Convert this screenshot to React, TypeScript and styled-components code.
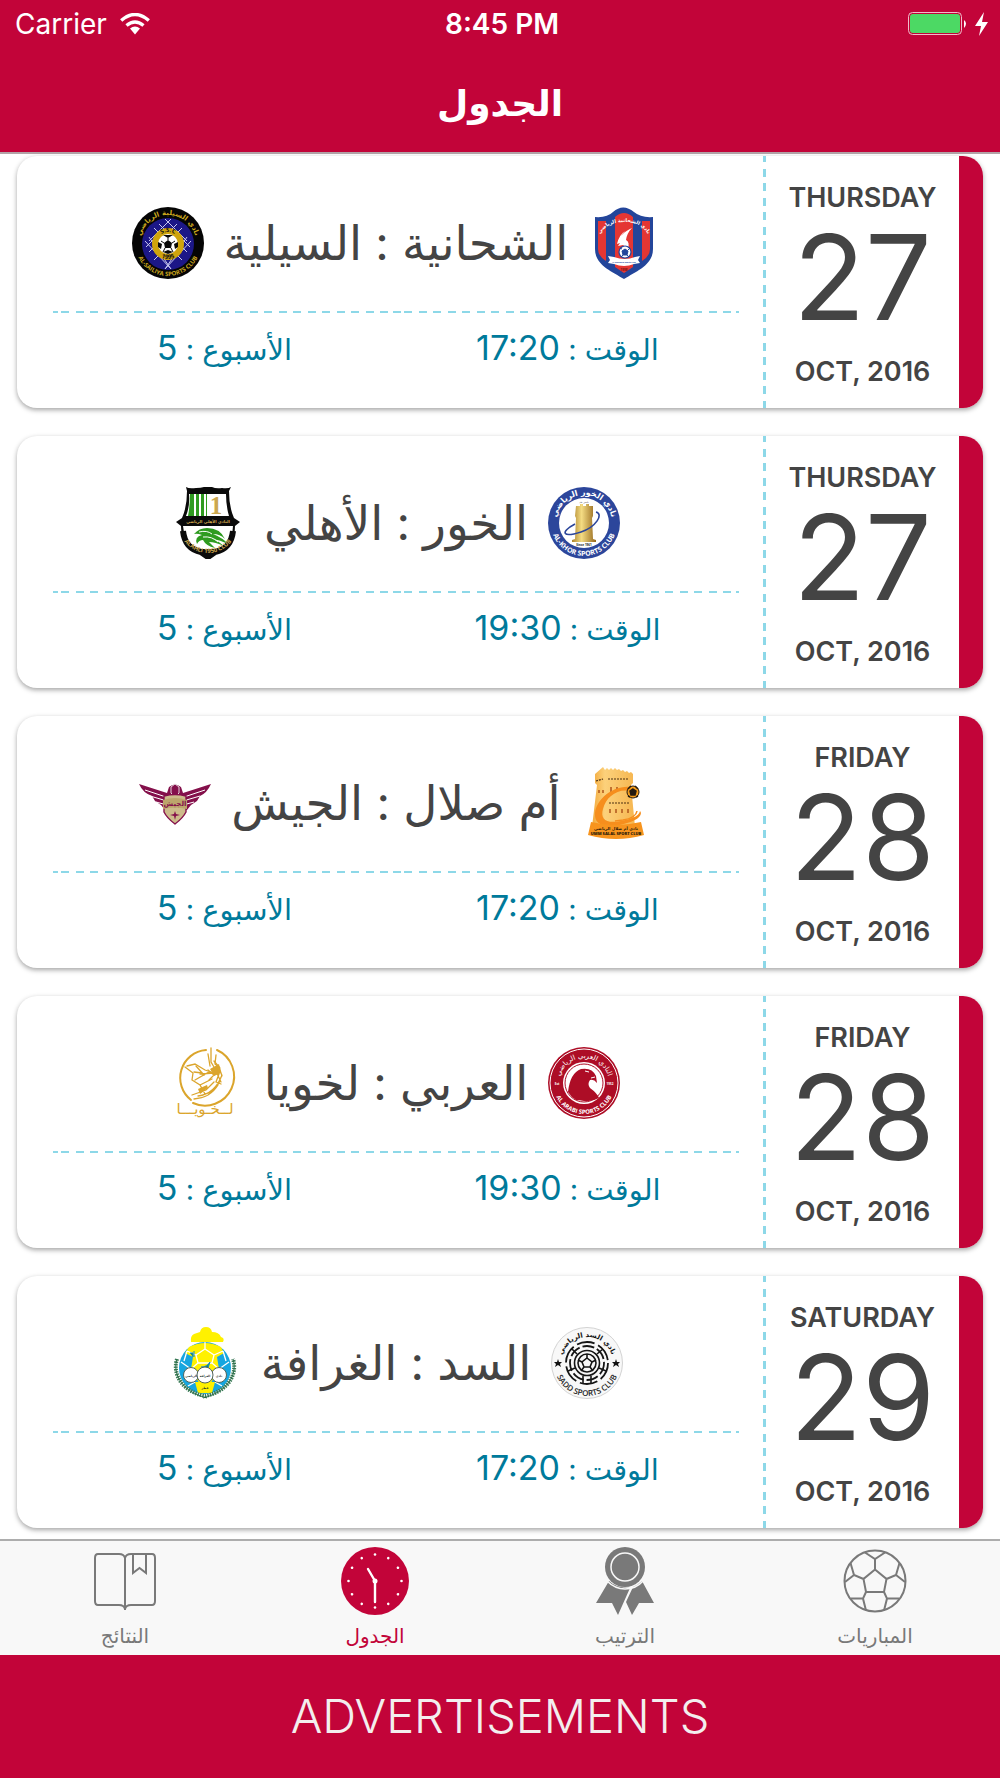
import React from 'react';
import styled, { createGlobalStyle } from 'styled-components';

const crimson = '#c20439';
const ink = '#444444';
const teal = '#007a9b';
const dash = '#8dd8e8';
const arabic = "'DejaVu Sans', sans-serif";
const ui = "Inter, 'DejaVu Sans', sans-serif";

const GlobalStyle = createGlobalStyle`
  * { box-sizing: border-box; }
  body { margin: 0; background: #fff; font-family: ${ui}; }
`;

const Screen = styled.div`
  display: flex;
  flex-direction: column;
  min-height: 100vh;
`;

const Header = styled.header`
  background: ${crimson};
  color: #fff;
  border-bottom: 2px solid #b3a3a7;
`;

const StatusBar = styled.div`
  display: grid;
  grid-template-columns: 1fr auto 1fr;
  align-items: center;
  height: 48px;
  padding: 0 11px 0 15px;
  font-size: 28px;
  line-height: 32px;
`;

const Carrier = styled.span`
  display: flex;
  align-items: center;
  gap: 13px;
`;

const Clock = styled.time`
  font-weight: 600;
`;

const Power = styled.span`
  display: flex;
  justify-content: flex-end;
  align-items: center;
  gap: 8px;
`;

const Title = styled.h1`
  margin: 0;
  height: 104px;
  padding-top: 30px;
  text-align: center;
  font-size: 36px;
  line-height: 50px;
  font-weight: 700;
`;

const List = styled.main`
  flex: 1;
  display: flex;
  flex-direction: column;
  gap: 28px;
  padding: 2px 17px 11px;
`;

const Card = styled.article`
  display: flex;
  background: #fff;
  border-radius: 20px;
  overflow: hidden;
  box-shadow: 0 2px 5px rgba(0, 0, 0, 0.36);
`;

const Match = styled.div`
  flex: 1;
  padding: 51px 24px 37px 36px;
`;

const Teams = styled.div`
  display: flex;
  align-items: center;
  justify-content: center;
  gap: 20px;
  height: 72px;
`;

const TeamNames = styled.h2`
  margin: 0;
  color: ${ink};
  font-size: 47px;
  line-height: 72px;
  font-weight: 400;
  white-space: nowrap;
`;

const Divider = styled.div`
  display: grid;
  grid-template-columns: 1fr 1fr;
  height: 2px;
  margin-top: 32px;
`;

const DashedHalf = styled.span`
  background:
    linear-gradient(${dash}, ${dash}) left / 5px 100% no-repeat,
    linear-gradient(${dash}, ${dash}) right / 3px 100% no-repeat,
    linear-gradient(90deg, ${dash} 8px, transparent 8px 15px, ${dash} 15px 23px, transparent 23px) 8px 0 / 29px 100% repeat-x;
`;

const Facts = styled.div`
  display: grid;
  grid-template-columns: 1fr 1fr;
  padding-top: 16px;
  color: ${teal};
  font-size: 29px;
  line-height: 42px;
  text-align: center;
`;

const Fact = styled.span`
  white-space: nowrap;
`;

const FactValue = styled.bdi`
  font-size: 34px;
  line-height: 34px;
`;

const DateBox = styled.time`
  width: 196px;
  padding: 26px 0 19px 3px;
  display: flex;
  flex-direction: column;
  align-items: center;
  color: ${ink};
  background: linear-gradient(${dash} 8px, transparent 8px 15px, ${dash} 15px 23px, transparent 23px) 0 -2px / 3px 29px repeat-y;
`;

const DateLabel = styled.span`
  font-size: 27px;
  line-height: 32px;
  font-weight: 600;
`;

const DayNumber = styled.span`
  font-size: 118px;
  line-height: 126px;
  margin-bottom: 16px;
`;

const Stripe = styled.div`
  width: 24px;
  background: ${crimson};
`;

const TabBar = styled.nav`
  display: grid;
  grid-template-columns: repeat(4, 1fr);
  height: 116px;
  border-top: 2px solid #adadad;
  background: #f8f8f8;
`;

const Tab = styled.button<{ $active?: boolean }>`
  display: flex;
  flex-direction: column;
  align-items: center;
  gap: 7px;
  padding: 6px 0 0;
  border: 0;
  background: none;
  color: ${(p) => (p.$active ? crimson : '#797979')};
  font-family: ${arabic};
  font-size: 20px;
  line-height: 28px;
`;

const Advert = styled.aside`
  display: flex;
  align-items: center;
  justify-content: center;
  height: 123px;
  padding-bottom: 2px;
  background: ${crimson};
  color: #f3eeee;
  font-size: 47px;
  font-weight: 300;
`;

/* ---------- club badges, all on a 72 x 72 grid ---------- */

type RingProps = {
  id: string; r: number; text: string; size: number; fill: string;
  bottom?: boolean; rtl?: boolean; weight?: number;
};

const RingText = ({ id, r, text, size, fill, bottom, rtl, weight = 700 }: RingProps) => (
  <>
    <path id={id} fill="none" d={`M${36 - r} 36A${r} ${r} 0 0 ${bottom ? 0 : 1} ${36 + r} 36`} />
    <text fontSize={size} fontWeight={weight} fill={fill} fontFamily={rtl ? arabic : "'Open Sans', sans-serif"} direction={rtl ? 'rtl' : 'ltr'}>
      <textPath href={`#${id}`} startOffset="50%" textAnchor="middle">{text}</textPath>
    </text>
  </>
);

const Badge = ({ label, children }: { label: string; children: React.ReactNode }) => (
  <svg width="72" height="72" viewBox="0 0 72 72" role="img" aria-label={label}>{children}</svg>
);

const Sailiya = () => (
  <Badge label="السيلية">
    <circle cx="36" cy="36" r="36" fill="#050505" />
    <circle cx="36" cy="37" r="26" fill="#1c1787" />
    <g stroke="#c9c9f0" strokeWidth="1" fill="none">
      <path d="M33 12l22 22M39 12L17 34M27 17l28 28M45 17L17 45M17 30l22 32M55 30L33 62M13 34l26 28M59 34L33 62M14 40l8-8M58 40l-8-8M22 21l8 8M50 21l-8 8M22 53l8-8M50 53l-8-8" />
    </g>
    <circle cx="36" cy="37" r="16" fill="#d0a40c" />
    <circle cx="36" cy="37" r="10" fill="#fff" />
    <path d="M36 33l4 3-1 5h-6l-1-5zM31 28h10l-5 3zM26 35l4 2-1 5-3-2zM46 35l-4 2 1 5 3-2zM31 45l5-2 5 2-5 2z" fill="#090909" />
    <path d="M36 31v2M40 36l3-2M39 41l2 4M33 41l-2 4M32 36l-3-2" stroke="#090909" strokeWidth="1" />
    <RingText id="sa-a" r={11} text="S.S.C" size={6} fill="#111" />
    <RingText id="sa-b" r={16} text="1995" size={6} fill="#111" bottom />
    <RingText id="sa-c" r={28} text="نادي السيلية الرياضي" size={7} fill="#cda91e" rtl />
    <RingText id="sa-d" r={33} text="AL-SAILIYA SPORTS CLUB" size={6} fill="#cda91e" bottom />
  </Badge>
);

const Shahaniya = () => (
  <Badge label="الشحانية">
    <path d="M7 10q12 1 18-5 10-9 21 0 7 6 19 5v32c0 16-16 22-29 30C23 64 7 58 7 42z" fill="#23459a" />
    <path d="M10 14h8v40q-8-5-8-12zM54 14h8v28q0 7-8 12zM27 10q9-8 18 0v50l-9 6-9-6z" fill="#e43633" />
    <path d="M44 21C37 24 31 29 29 37l3-1-2 3 5-1 5 4q2-7-2-9 1-7 6-12zM37 24q-6 4-8 13 3-8 8-13z" fill="#fff" />
    <circle cx="37" cy="45" r="6" fill="#fff" stroke="#23459a" strokeWidth="1.2" />
    <path d="M37 42l3 2-1 4h-4l-1-4zM32 41l2 1M42 41l-2 2M33 50l2-2M41 50l-2-2" fill="#23459a" stroke="#23459a" />
    <path d="M20 49l6 1q11 4 21 0l5-1-2 4 2 3-6 1q-10 4-20 0l-6-1 2-3z" fill="#fff" />
    <text x="36" y="56" textAnchor="middle" fontFamily="'Open Sans', sans-serif" fontSize="2" fontWeight="700" fill="#23459a">Al Shahania Sports Club</text>
    <text x="36" y="64" textAnchor="middle" fontFamily="'Open Sans', sans-serif" fontSize="3" fontWeight="700" fill="#711">1998</text>
    <path id="sh-a" d="M10 32Q16 15 36 15T62 32" fill="none" />
    <text fontFamily={arabic} fontSize="5" fontWeight="700" fill="#fff" direction="rtl">
      <textPath href="#sh-a" startOffset="50%" textAnchor="middle">نادي الشحانية الرياضي</textPath>
    </text>
  </Badge>
);

const Khor = () => (
  <Badge label="الخور">
    <circle cx="36" cy="36" r="36" fill="#2c469b" />
    <circle cx="36" cy="36" r="25" fill="#fff" />
    <defs>
      <linearGradient id="kh-g">
        <stop offset="0" stopColor="#ad842c" /><stop offset=".4" stopColor="#f4dc83" /><stop offset="1" stopColor="#94661a" />
      </linearGradient>
    </defs>
    <path d="M28 19h4v-2h3v2h3v-2h3v2h4v10l-1 2 1 21 3 1v2H24v-2l3-1 1-21-1-2z" fill="url(#kh-g)" />
    <path d="M27 37c-15 8-13 14 6 8 15-5 23-18 15-20" fill="none" stroke="#2c469b" strokeWidth="1.600" />
    <text x="36" y="16" textAnchor="middle" fontFamily={arabic} fontSize="2" fill="#333">تأسس عام</text>
    <text x="36" y="59" textAnchor="middle" fontFamily="'Open Sans', sans-serif" fontSize="3" fontWeight="700" fill="#222">Since 1961</text>
    <RingText id="kh-a" r={28} text="نادي الخور الرياضي" size={8} fill="#fff" rtl />
    <RingText id="kh-b" r={33} text="AL-KHOR SPORTS CLUB" size={7} fill="#fff" bottom />
  </Badge>
);

const Ahli = () => (
  <Badge label="الأهلي">
    <path d="M14 0q3 2 10 1 5 0 8-1h8q4 2 10 1 6 1 9-1l-2 4q0 16 5 27l6 4-5 4q0 23-20 28-5 1-8 5-3-4-8-5Q9 62 9 39l-5-4 6-4Q15 20 15 4z" fill="#0a0a0a" />
    <path d="M17 7h37q0 12 3 22H14q4-10 3-22z" fill="#fff" />
    <path d="M18 7h4v22h-6q2-10 2-22zM24 7h3v22h-3zM29 7h3v22h-3zM34 7h1v22h-1z" fill="#2f9b20" />
    <text x="44" y="27" textAnchor="middle" fontFamily="'Liberation Serif', serif" fontSize="25" fontWeight="700" fill="#cba74f">1</text>
    <text x="36" y="36" textAnchor="middle" fontFamily={arabic} fontSize="4" fontWeight="700" fill="#d4a94f" direction="rtl">النادي الأهلي الرياضي</text>
    <path d="M11 39h50q-1 20-18 23H29Q13 58 11 39z" fill="#fff" />
    <path d="M22 47q5-6 13-6 13 0 18 11-5-5-12-5 10 4 15 10-8-4-15-5 7 3 11 7-9-4-15-4l6 6q-9-2-12-8-4 0-6 4-3-7 5-9-5-2-8-1z" fill="#2f9b20" />
    <path d="M27 45q8-2 13 2M31 50q9-1 15 5" fill="none" stroke="#fff" strokeWidth="1" />
    <path d="M11 44q2 18 18 21l7 5 7-5q16-3 18-21" fill="none" stroke="#0a0a0a" strokeWidth="6" />
    <RingText id="ah-a" r={30} text="ALAHLI 1950 CLUB" size={6} fill="#cba74f" bottom />
  </Badge>
);

const UmmSalal = () => (
  <Badge label="أم صلال">
    <defs>
      <linearGradient id="us-g">
        <stop offset="0" stopColor="#f2a93b" /><stop offset=".3" stopColor="#fcd17b" /><stop offset="1" stopColor="#f6b650" />
      </linearGradient>
    </defs>
    <g transform="translate(5 0)">
      <path d="M9 7l8-7 2 3 2-2 2 2 2-2 2 2 2-2 2 2 2-1 2 2 2-1 2 2 2-1 2 2 2-1 2 2v9l-2 2 4 42H6l5-42-2-2z" fill="url(#us-g)" />
      <path d="M22 12h21M23 36h20M10 14l7-2" stroke="#4d3111" strokeWidth="1.200" strokeDasharray="2 1" />
      <path d="M13 23v3M17 23v3M25 20v5M31 20v4M24 42v4M30 42v4M36 42v4M42 42v4" fill="none" stroke="#b0551b" strokeWidth="1.500" />
      <path d="M45 20C26 18 8 34 9 49c1 13 20 11 32 7 12-3 16-9 13-12-1 6-10 8-19 10-15 3-21-2-18-12 3-12 14-21 28-18z" fill="#f68e1d" />
      <path d="M51 44q-1 7-14 9l-8 1" fill="none" stroke="#f68e1d" strokeWidth="1.500" />
      <circle cx="47" cy="25" r="6" fill="#f59c1a" stroke="#241a10" strokeWidth="1" />
      <path d="M47 22l3 2-1 4h-4l-1-4zM42 22l3-3M52 22l-3-3M42 29l2 1M52 29l-2 1" fill="#241a10" stroke="#241a10" strokeWidth="1.500" />
      <path d="M5 55q25 6 50 0l3 13q-28 8-56 0z" fill="#f7941e" />
      <text x="30" y="63" textAnchor="middle" fontFamily={arabic} fontSize="4" fontWeight="700" fill="#2a1a09" direction="rtl">نادي أم صلال الرياضي</text>
      <text x="30" y="68" textAnchor="middle" fontFamily="'Open Sans', sans-serif" fontSize="4" fontWeight="800" fill="#2a1a09">UMM SALAL SPORT CLUB</text>
    </g>
  </Badge>
);

const Jaish = () => (
  <Badge label="الجيش">
    <path d="M0 17l28 9 2-6q6-5 12 0l2 6 28-9q-4 9-11 12l-3 5-6 4-4 5H26l-4-5-6-4-3-5Q4 26 0 17z" fill="#84104b" />
    <path d="M6 23l21 7M11 29l17 5M17 35l11 3M66 23l-21 7M61 29l-17 5M55 35l-11 3" stroke="#fff" strokeWidth="1" />
    <path d="M36 17l4 3v6l-4 4-4-4v-6z" fill="#84104b" stroke="#e5d5dc" strokeWidth="1" />
    <path d="M25 29q11-3 22 0v16q-3 6-11 12-8-6-11-12z" fill="#cdbb8b" stroke="#84104b" strokeWidth="1.400" />
    <path d="M24 33q12-4 24 0v9q-12-3-24 0z" fill="#bca66c" />
    <text x="36" y="39" textAnchor="middle" fontFamily={arabic} fontSize="7" fontWeight="700" fill="#84104b" direction="rtl">الجيش</text>
    <path d="M36 44l1 3 4 1-4 1-1 4-1-4-4-1 4-1z" fill="#84104b" />
  </Badge>
);

const Arabi = () => (
  <Badge label="العربي">
    <circle cx="36" cy="36" r="36" fill="#ad0d26" />
    <circle cx="36" cy="36" r="34" fill="none" stroke="#fff" strokeWidth="1" />
    <circle cx="36" cy="36" r="21" fill="#fff" />
    <circle cx="36" cy="36" r="19" fill="none" stroke="#ad0d26" strokeWidth="1" />
    <path d="M20 45Q22 26 33 22q11-2 15 7l1 7q-3-4-7-3-3 4 0 8 7 5 9 10-7 4-15 3l-6-1-2 0q-5-3-8-8z" fill="#ad0d26" />
    <path d="M37 24l4 1M43 31l4-1" stroke="#fff" strokeWidth="1" />
    <text x="9" y="38" textAnchor="middle" fontFamily="'Open Sans', sans-serif" fontSize="3" fontWeight="700" fill="#fff">Est</text>
    <text x="62" y="38" textAnchor="middle" fontFamily="'Open Sans', sans-serif" fontSize="3" fontWeight="700" fill="#fff">1952</text>
    <RingText id="ar-a" r={25} text="النادي العربي الرياضي" size={7} fill="#fff" rtl weight={400} />
    <RingText id="ar-b" r={31} text="AL ARABI SPORTS CLUB" size={6} fill="#fff" bottom />
  </Badge>
);

const Lekhwiya = () => (
  <Badge label="لخويا">
    <g fill="none" stroke="#dba52c" strokeLinecap="round">
      <path d="M34 3A28 28 0 0 0 19 53M45 3a28 28 0 0 1-24 53" strokeWidth="2" />
      <path d="M39 1v14l3 5M36 7l2 12M44 8l-1 9 5 4M15 19l8-2 10 6 9 3-14 1M13 20l8 6-1 7 8 5 5 9M23 33l14-8 10 2-3 8 5 2M28 38l12-6M22 52q16-1 24-14M20 48l14-5 8-8M33 47q9-1 15-13M26 49q17-2 24-21M47 20l3 9M42 20l7 15" strokeWidth="1.300" />
      <path d="M24 19l8 9M30 26l-8-1M36 23l6 5-5 5M42 14l5 6" strokeWidth="1.300" />
    </g>
    <path d="M38 22l9-5 2 9-7 3zM26 42l9-4 1 3-8 6z" fill="#dba52c" />
    <text x="33" y="67" textAnchor="middle" fontFamily={arabic} fontSize="15" fill="#dba52c" direction="rtl">لــخـويـــا</text>
  </Badge>
);

const Sadd = () => (
  <Badge label="السد">
    <circle cx="36" cy="36" r="35.500" fill="#f8f8f8" stroke="#d2d2d2" strokeWidth="1" />
    <g fill="none" stroke="#151515">
      <circle cx="36" cy="36" r="21" strokeWidth="1.800" strokeDasharray="18 4" />
      <circle cx="36" cy="36" r="17" strokeWidth="1.800" strokeDasharray="12 3" />
      <circle cx="36" cy="36" r="12.500" strokeWidth="1.600" />
      <circle cx="36" cy="36" r="9" strokeWidth="1.600" />
      <path d="M36 31l5 4-2 5h-6l-2-5zM36 31v-4M41 35l4-2M39 40l3 4M33 40l-3 4M31 35l-4-2M21 22l5 5M52 22l-6 5M17 44l7-3M55 44l-7-3M32 49v8M40 49v8" strokeWidth="1.600" />
    </g>
    <path d="M7 32l1 3h3l-2 2 1 3-3-2-3 2 1-3-2-2h3zM65 32l1 3h3l-2 2 1 3-3-2-3 2 1-3-2-2h3z" fill="#111" />
    <RingText id="sd-a" r={26} text="نادي السد الرياضي" size={7} fill="#151515" rtl />
    <RingText id="sd-b" r={33} text="SADD SPORTS CLUB" size={8} fill="#222" bottom weight={600} />
  </Badge>
);

const Gharafa = () => (
  <Badge label="الغرافة">
    <path d="M22 15q-1-6 3-8 3-1 6-2 1-5 6-5t6 5q7 0 9 5 4 1 2 5z" fill="#fff100" />
    <circle cx="36" cy="41" r="26" fill="#16a6e0" />
    <path d="M20 20q16-8 32 0l3 6-7 4 2 12-14 24-14-24 2-12-8-4z" fill="#fff100" />
    <path d="M26 55h20l-3 11H29z" fill="#fff100" />
    <g fill="none" stroke="#fff" strokeWidth="1.300">
      <path d="M36 22l-9 6 2 8h14l2-8zM36 22v-7M27 28l-9-4M45 28l9-4M29 36l-7 6M43 36l7 6M12 35l10 7v14M60 35l-10 7v14M18 24l-3 10M54 24l3 10M26 55l-7 4M46 55l7 4" />
    </g>
    <path d="M21 26h3v4M25 24v6M32 40q6 0 9-5l-2 6-5 2z" fill="#19895f" stroke="#158acb" strokeWidth="1" />
    <g fill="#fff" stroke="#53645b" strokeWidth="1">
      <circle cx="22" cy="48" r="7.500" /><circle cx="50" cy="48" r="7.500" /><circle cx="36" cy="48" r="8" />
    </g>
    <g fontFamily={arabic} fontSize="3" fontWeight="700" fill="#20312a" textAnchor="middle" direction="rtl">
      <text x="50" y="50">نادي</text><text x="36" y="50">الغرافة</text><text x="22" y="50">الرياضي</text><text x="36" y="62">قطر</text>
    </g>
    <path d="M8 32C3 48 14 65 36 69 58 65 69 48 64 32" fill="none" stroke="#3a7c57" strokeWidth="4" strokeDasharray="1.500 1" />
    <path d="M8 32C3 48 14 65 38 71M64 32C69 48 58 65 34 71" fill="none" stroke="#2f6d4b" strokeWidth="1" />
  </Badge>
);

/* ---------- tab icons, all on a 68 x 68 grid ---------- */

const TabIcon = ({ children }: { children: React.ReactNode }) => (
  <svg width="68" height="68" viewBox="0 0 68 68" fill="none" stroke="currentColor" strokeWidth="2" aria-hidden="true">{children}</svg>
);

const BallIcon = () => (
  <TabIcon>
    <circle cx="34" cy="34" r="30.500" />
    <path d="M34 22.500L45.500 32 43 45H25L22.500 32zM34 22.500V12M24 5.500L34 12l10-6.500M45.500 32l9.500-4 3.500-12M55 28l9 7M43 45l3 6.500-3 12M46 51.500h12M25 45l-3 6.500 3 12M22 51.500H10M22.500 32L13 28 9.500 16M13 28l-9 7" />
  </TabIcon>
);

const MedalIcon = () => (
  <TabIcon>
    <g fill="currentColor" stroke="none">
      <path d="M18 34q7 7 21 7L27 68l-6-12H5zM51 34l12 22H48l-7 12-6-13 7-15q5-2 9-6z" />
      <circle cx="34" cy="20" r="20" />
    </g>
    <circle cx="34" cy="20" r="14" stroke="#f8f8f8" strokeWidth="1.500" />
    <path d="M16 34q8 8 18 8 11 0 18-8" stroke="#f8f8f8" strokeWidth="1.600" />
  </TabIcon>
);

const ClockIcon = () => (
  <TabIcon>
    <circle cx="34" cy="34" r="34" fill="currentColor" stroke="none" />
    {Array.from({ length: 12 }, (_, i) => (
      <circle key={i} cx="34" cy="7.500" r="1.300" fill="#fff" stroke="none" transform={`rotate(${i * 30} 34 34)`} />
    ))}
    <path d="M34 55V34L27 22" stroke="#fff" strokeWidth="2.400" strokeLinecap="round" />
    <circle cx="34" cy="34" r="2.500" fill="#fff" stroke="none" />
  </TabIcon>
);

const BookIcon = () => (
  <TabIcon>
    <path d="M34 63V11q-1-4-6-4H7q-3 0-3 4v43q0 4 3 4h21q5 0 6 4 1-4 6-4h21q3 0 3-4V11q0-4-3-4H40q-5 0-6 4M42 7v19l6.500-5 6.500 5V7" />
  </TabIcon>
);

const WifiIcon = () => (
  <svg width="30" height="22" viewBox="0 0 30 22" fill="none" stroke="#fff" strokeWidth="3.400" aria-hidden="true">
    <path d="M1.200 7.500q13.800-12 27.600 0M6.500 12.500q8.500-7 17 0" />
    <path d="M10 15.500q5-4 10 0l-5 6z" fill="#fff" stroke="none" />
  </svg>
);

const BatteryIcon = () => (
  <svg width="59" height="24" viewBox="0 0 59 24" aria-hidden="true">
    <rect x=".5" y=".5" width="53" height="22" rx="4" fill="none" stroke="#f0bccb" />
    <rect x="2" y="2" width="50" height="19" rx="3" fill="#4cd964" />
    <path d="M56 8q4 3.500 0 8z" fill="#fff" />
  </svg>
);

const BoltIcon = () => (
  <svg width="14" height="24" viewBox="0 0 14 24" aria-hidden="true">
    <path d="M9 0L0 14h6L4 24l9-14H7z" fill="#fff" />
  </svg>
);

/* ---------- data ---------- */

const matches = [
  { home: 'الشحانية', away: 'السيلية', Home: Shahaniya, Away: Sailiya, time: '17:20', weekday: 'THURSDAY', day: '27' },
  { home: 'الخور', away: 'الأهلي', Home: Khor, Away: Ahli, time: '19:30', weekday: 'THURSDAY', day: '27' },
  { home: 'أم صلال', away: 'الجيش', Home: UmmSalal, Away: Jaish, time: '17:20', weekday: 'FRIDAY', day: '28' },
  { home: 'العربي', away: 'لخويا', Home: Arabi, Away: Lekhwiya, time: '19:30', weekday: 'FRIDAY', day: '28' },
  { home: 'السد', away: 'الغرافة', Home: Sadd, Away: Gharafa, time: '17:20', weekday: 'SATURDAY', day: '29' },
];

const tabs = [
  { label: 'المباريات', Icon: BallIcon },
  { label: 'الترتيب', Icon: MedalIcon },
  { label: 'الجدول', Icon: ClockIcon, active: true },
  { label: 'النتائج', Icon: BookIcon },
];

export default function App() {
  return (
    <Screen>
      <GlobalStyle />
      <Header>
        <StatusBar>
          <Carrier>Carrier <WifiIcon /></Carrier>
          <Clock>8:45 PM</Clock>
          <Power><BatteryIcon /><BoltIcon /></Power>
        </StatusBar>
        <Title dir="rtl">الجدول</Title>
      </Header>
      <List>
        {matches.map(({ home, away, Home, Away, time, weekday, day }) => (
          <Card key={home}>
            <Match dir="rtl">
              <Teams>
                <Home />
                <TeamNames>{home} : {away}</TeamNames>
                <Away />
              </Teams>
              <Divider dir="ltr"><DashedHalf /><DashedHalf /></Divider>
              <Facts>
                <Fact>الوقت : <FactValue>{time}</FactValue></Fact>
                <Fact>الأسبوع : <FactValue>5</FactValue></Fact>
              </Facts>
            </Match>
            <DateBox dateTime={`2016-10-${day}`}>
              <DateLabel>{weekday}</DateLabel>
              <DayNumber>{day}</DayNumber>
              <DateLabel>OCT, 2016</DateLabel>
            </DateBox>
            <Stripe />
          </Card>
        ))}
      </List>
      <TabBar dir="rtl">
        {tabs.map(({ label, Icon, active }) => (
          <Tab key={label} type="button" $active={active} aria-current={active ? 'page' : undefined}>
            <Icon />
            {label}
          </Tab>
        ))}
      </TabBar>
      <Advert>ADVERTISEMENTS</Advert>
    </Screen>
  );
}
